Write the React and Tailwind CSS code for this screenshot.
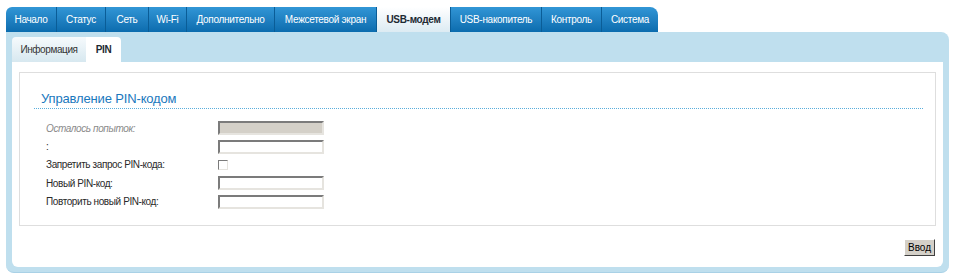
import React from 'react';

const tabs = [
  { label: 'Начало', w: 51 },
  { label: 'Статус', w: 49 },
  { label: 'Сеть', w: 43 },
  { label: 'Wi-Fi', w: 38 },
  { label: 'Дополнительно', w: 88 },
  { label: 'Межсетевой экран', w: 102 },
  { label: 'USB-модем', w: 74, active: true },
  { label: 'USB-накопитель', w: 91 },
  { label: 'Контроль', w: 60 },
  { label: 'Система', w: 56 },
];

const Field = ({ disabled }) => (
  <div
    className={`w-[106px] h-[14px] border-2 border-t-[#7b7b7b] border-l-[#7b7b7b] border-b-[#e6e4df] border-r-[#e6e4df] ${
      disabled ? 'bg-[#d4d0c8]' : 'bg-white'
    }`}
  />
);

const Row = ({ label, muted, children }) => (
  <div className="flex items-center h-[18.4px]">
    <span className={`w-[172px] ${muted ? 'italic text-[#8a8a8a]' : 'text-[#2a2a2a]'}`}>{label}</span>
    {children}
  </div>
);

const App = () => {
  return (
    <div className="w-[956px] h-[279px] bg-white pt-[7px] pl-[6px] font-['Liberation_Sans',Arial,sans-serif] text-[10px] tracking-[-0.4px]">
      {/* top tabs */}
      <div className="flex w-[652px] h-[25px] rounded-tl-[6px] rounded-tr-[8px] overflow-hidden bg-gradient-to-b from-[#3196d6] to-[#0b6cae]">
        {tabs.map((t) => (
          <div
            key={t.label}
            style={{ width: t.w }}
            className={`flex items-center justify-center text-[10px] tracking-[-0.3px] border-r border-[#0a5d97] last:border-r-0 ${
              t.active
                ? 'bg-gradient-to-b from-white to-[#dcebf3] text-[#1d2a33] font-bold'
                : 'text-white'
            }`}
          >
            {t.label}
          </div>
        ))}
      </div>

      {/* panel */}
      <div className="w-[943px] h-[241px] bg-[#bfdfee] rounded-tr-[8px] rounded-b-[8px] border-b border-[#a9d1e6] px-[6px] pb-[5px] flex flex-col">
        <div className="flex h-[30px] items-end pt-[5px]">
          <div className="w-[74px] h-[25px] flex items-center justify-center rounded-tl-[4px] bg-gradient-to-b from-[#f6fafc] to-[#d7e8f0] text-[#333]">
            Информация
          </div>
          <div className="w-[35px] h-[25px] flex items-center justify-center rounded-tr-[4px] bg-white text-[#1d2a33] font-bold">
            PIN
          </div>
        </div>

        <div className="flex-1 bg-white rounded-b-[6px] px-[7px] pt-[10px] flex flex-col">
          <div className="h-[154px] border border-[#dedede] pt-[18px]">
            <div className="ml-[14px] mr-[12px] border-b border-dotted border-[#5aaedc] pl-[7px] pb-[1px] text-[13px] tracking-[-0.15px] text-[#1a78bd] leading-[16px]">
              Управление PIN-кодом
            </div>
            <div className="pl-[26px] pt-[10px] flex flex-col">
              <Row label="Осталось попыток:" muted>
                <Field disabled />
              </Row>
              <Row label=":">
                <Field />
              </Row>
              <Row label="Запретить запрос PIN-кода:">
                <div className="w-[10px] h-[10px] border border-t-[#7b7b7b] border-l-[#7b7b7b] border-b-[#e6e4df] border-r-[#e6e4df] bg-white" />
              </Row>
              <Row label="Новый PIN-код:">
                <Field />
              </Row>
              <Row label="Повторить новый PIN-код:">
                <Field />
              </Row>
            </div>
          </div>
          <div className="flex justify-end pt-[13px] pr-[1px]">
            <button className="w-[31px] h-[17px] bg-[#d4d0c8] border border-t-white border-l-white border-b-[#404040] border-r-[#404040] text-[10px] text-black leading-none tracking-normal">
              Ввод
            </button>
          </div>
        </div>
      </div>
    </div>
  );
};

export default App;
